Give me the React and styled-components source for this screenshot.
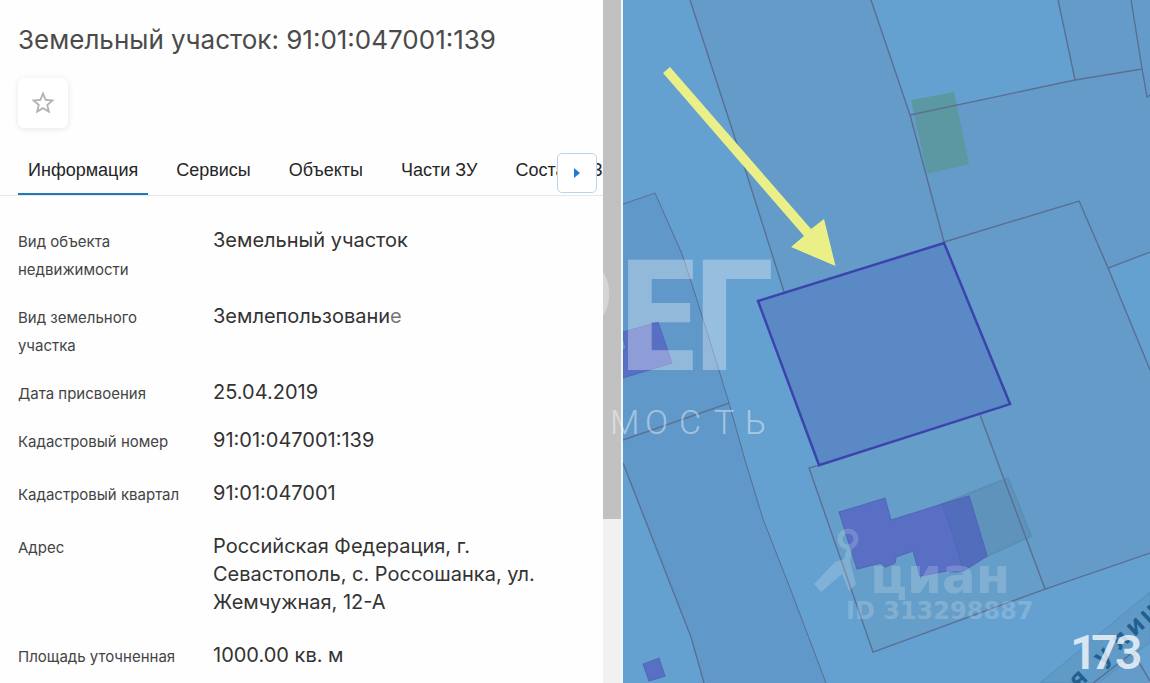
import React from "react";
import styled, { createGlobalStyle } from "styled-components";
import { MdStarBorder } from "react-icons/md";

const GlobalStyle = createGlobalStyle`
  * { box-sizing: border-box; }
  body { margin: 0; background: #fefefe; font-family: Inter, "Liberation Sans", sans-serif; }
`;

const Page = styled.div`
  position: relative;
  display: grid;
  grid-template-columns: 13fr 11fr;
  height: 100vh;
  overflow: hidden;
`;

const Side = styled.div`
  display: flex;
  min-width: 0;
  height: 100vh;
  border-right: 2px solid #eef7fa;
`;

const Panel = styled.main`
  flex: 1;
  min-width: 0;
  overflow: hidden;
  padding-top: 24px;
  background: #fefefe;
`;

const ScrollTrack = styled.div`
  flex: none;
  width: 18px;
  background: #f1f1f2;
`;

const ScrollThumb = styled.div`
  height: 76%;
  background: #c1c1c1;
`;

const Title = styled.h1`
  margin: 0 18px;
  font-size: 26px;
  line-height: 32px;
  font-weight: 400;
  color: #4b4b4b;
  white-space: nowrap;
`;

const FavoriteButton = styled.button`
  display: flex;
  align-items: center;
  justify-content: center;
  width: 50px;
  height: 50px;
  margin: 22px 18px 0;
  padding: 0;
  border: 0;
  border-radius: 6px;
  background: #fff;
  color: #b3b3b3;
  box-shadow: 0 1px 6px rgba(0, 0, 0, 0.1);
`;

const TabBar = styled.nav`
  position: relative;
  display: flex;
  gap: 18px;
  height: 52px;
  margin-top: 16px;
  padding-left: 18px;
  overflow: hidden;
  border-bottom: 1px solid #e3e8ea;
`;

const Tab = styled.button`
  flex: none;
  padding: 2px 10px 0;
  border: 0;
  border-bottom: 2px solid ${(p) => (p.$active ? "#2279b5" : "transparent")};
  background: none;
  font-family: "Liberation Sans", Arial, sans-serif;
  font-size: 18px;
  line-height: 20px;
  color: #262626;
  white-space: nowrap;
`;

const NextTabs = styled.button`
  position: absolute;
  top: 9px;
  right: 6px;
  display: flex;
  align-items: center;
  justify-content: center;
  width: 40px;
  height: 40px;
  padding: 0;
  border: 1px solid #bcd3ee;
  border-radius: 5px;
  background: #fff;
`;

const Details = styled.dl`
  display: flex;
  flex-direction: column;
  gap: ${(p) => p.$gap}px;
  margin: 0;
  padding: ${(p) => p.$top}px 18px 0;
`;

const Row = styled.div`
  display: grid;
  grid-template-columns: 171px minmax(0, 336px);
  column-gap: 24px;
  line-height: 28px;
`;

const Label = styled.dt`
  padding-top: 2px;
  margin-bottom: -2px;
  font-size: 15px;
  font-weight: 400;
  color: #444;
`;

const Value = styled.dd`
  margin: 0;
  font-size: 20px;
  font-weight: 400;
  color: #333;
`;

const MapView = styled.section`
  min-width: 0;
  height: 100vh;
  background: #64a1d1;
`;

const MapDrawing = styled.svg`
  display: block;
  width: 100%;
  height: 100%;
`;

const Watermark = styled.svg`
  position: absolute;
  inset: 0;
  width: 100%;
  height: 100%;
  pointer-events: none;
`;

const tabs = ["Информация", "Сервисы", "Объекты", "Части ЗУ", "Состав ЕЗП"];

const mainDetails = [
  ["Вид объекта недвижимости", "Земельный участок"],
  ["Вид земельного участка", "Землепользование"],
  ["Дата присвоения", "25.04.2019"],
  ["Кадастровый номер", "91:01:047001:139"],
];

const placeDetails = [
  ["Кадастровый квартал", "91:01:047001"],
  ["Адрес", "Российская Федерация, г. Севастополь, с. Россошанка, ул. Жемчужная, 12-А"],
  ["Площадь уточненная", "1000.00 кв. м"],
];

function DetailList({ items, gap, top }) {
  return (
    <Details $gap={gap} $top={top}>
      {items.map(([label, value]) => (
        <Row key={label}>
          <Label>{label}</Label>
          <Value>{value}</Value>
        </Row>
      ))}
    </Details>
  );
}

function CadastralMap() {
  return (
    <MapDrawing viewBox="623 0 527 683" preserveAspectRatio="xMinYMin slice" role="img" aria-label="Кадастровая карта">
      <rect x="623" width="527" height="683" fill="#64a1d1" />
      <g fill="#659bc9">
        <path d="M690 0H871L910 115L944 242L784 292L746 172Z" />
        <path d="M1058 0H1131L1142 69L1075 80Z" />
        <path d="M1131 0H1150V95L1147 97L1142 69Z" />
        <path d="M910 115L1075 80L1142 69L1147 97L1150 95V252L1108 268L1150 370V553L1045 589L980 415L1010 404L944 242Z" />
        <path d="M623 204L655 193L682 254L697 300L718 367L729 403L745 460L763 519L790 588L826 683H704L691 637L623 463Z" fill="#5f98c9" />
        <path d="M809 468L980 415L1045 589L873 652Z" fill="#659ec8" />
        <path d="M1093 683L1133 652L1150 681V683Z" />
      </g>
      <path d="M911 100L954 92L969 164L927 174Z" fill="#5c98a2" />
      <path d="M942 504L1008 478L1031 536L987 556Z" fill="#5f93bb" stroke="#5a8fb6" strokeWidth="2" />
      <path d="M1040 683L1150 592V642L1098 683Z" fill="#609bc8" stroke="#5792bd" />
      <g fill="none" stroke="#5a6f92" strokeWidth="1.4">
        <path d="M690 0L746 172L784 292M871 0L910 115L944 242M910 115L1075 80L1142 69M1058 0L1075 80M1131 0L1142 69L1147 97L1150 95" />
        <path d="M944 242L1079 201L1108 268L1150 252M1108 268L1150 370M980 415L1045 589L1150 553M1045 589L873 652L809 468L819 465" />
        <path d="M623 440L729 403M623 463L691 637L704 683M1093 683L1133 652L1150 681" />
        <path d="M623 204L655 193L682 254L697 300L718 367L729 403L745 460L763 519L790 588L826 683" strokeWidth="1" />
      </g>
      <g fill="#596fc4" stroke="#5067ba">
        <path d="M623 332L658 322L672 363L623 378V350L626 349L623 337Z" />
        <path d="M643 664L659 658L665 676L649 681Z" />
        <path d="M839 512L885 498L891 520L942 504L969 496L987 556L963 571Q954 573 947 571L920 576L913 551L896 557L895 563L885 567L881 563L857 569Z" />
        <path d="M942 504L969 496L987 556L963 571Q956 541 942 504Z" fill="#536dbd" />
      </g>
      <path d="M758 301L944 243L1010 404L819 465Z" fill="#5b89c5" stroke="#3b43ad" strokeWidth="2.5" />
      <g transform="translate(1068 699) rotate(-43)">
        <text x="-9 14 47 71 91 110" y="0" fill="#235f8f" fontFamily="Inter, sans-serif" fontSize="25" fontWeight="700">аяулиц</text>
      </g>
      <path d="M663 73L670 67L811 229L824 219L835.500 266L791 247L804 236Z" fill="#eaf087" />
    </MapDrawing>
  );
}

function Watermarks() {
  return (
    <Watermark viewBox="0 0 1150 683" preserveAspectRatio="xMidYMin slice" fill="#fff">
      <text opacity="0.32" x="376 448 520 615 689" y="370" fontSize="154" fontWeight="700" fontFamily='"Noto Sans", sans-serif'>БЕРЕГ</text>
      <text opacity="0.42" x="367 402 437 472 507 542 577 610 645 679 714 745" y="434" fontSize="34" fontFamily="Roboto, sans-serif" fontWeight="300">НЕДВИЖИМОСТЬ</text>
      <g opacity="0.18">
        <circle cx="848" cy="539" r="8" fill="none" stroke="#fff" strokeWidth="5" />
        <path d="M814 584L835 562L844 559L847 548H852L850 562L856 584L849 591L842 574L821 592Z" />
        <text x="870" y="593" fontSize="50" fontWeight="700" fontFamily='"DejaVu Sans", sans-serif'>циан</text>
        <text x="846" y="619" fontSize="24" fontWeight="700" fontFamily='"DejaVu Sans", sans-serif'>ID 313298887</text>
      </g>
      <text opacity="0.75" x="1070 1091 1115" y="669" fontSize="48" fontWeight="600" fontFamily="Roboto, sans-serif">173</text>
    </Watermark>
  );
}

export default function App() {
  return (
    <Page>
      <GlobalStyle />
      <Side>
        <Panel>
          <Title>Земельный участок: 91:01:047001:139</Title>
          <FavoriteButton aria-label="В избранное">
            <MdStarBorder size={28} />
          </FavoriteButton>
          <TabBar>
            {tabs.map((name, i) => (
              <Tab key={name} $active={i === 0}>{name}</Tab>
            ))}
            <NextTabs aria-label="Следующие вкладки">
              <svg width="8" height="12" viewBox="0 0 8 12">
                <path d="M1 1L7 6L1 11Z" fill="#2079d8" />
              </svg>
            </NextTabs>
          </TabBar>
          <DetailList items={mainDetails} gap={20} top={30} />
          <DetailList items={placeDetails} gap={25} top={25} />
        </Panel>
        <ScrollTrack>
          <ScrollThumb />
        </ScrollTrack>
      </Side>
      <MapView>
        <CadastralMap />
      </MapView>
      <Watermarks />
    </Page>
  );
}
